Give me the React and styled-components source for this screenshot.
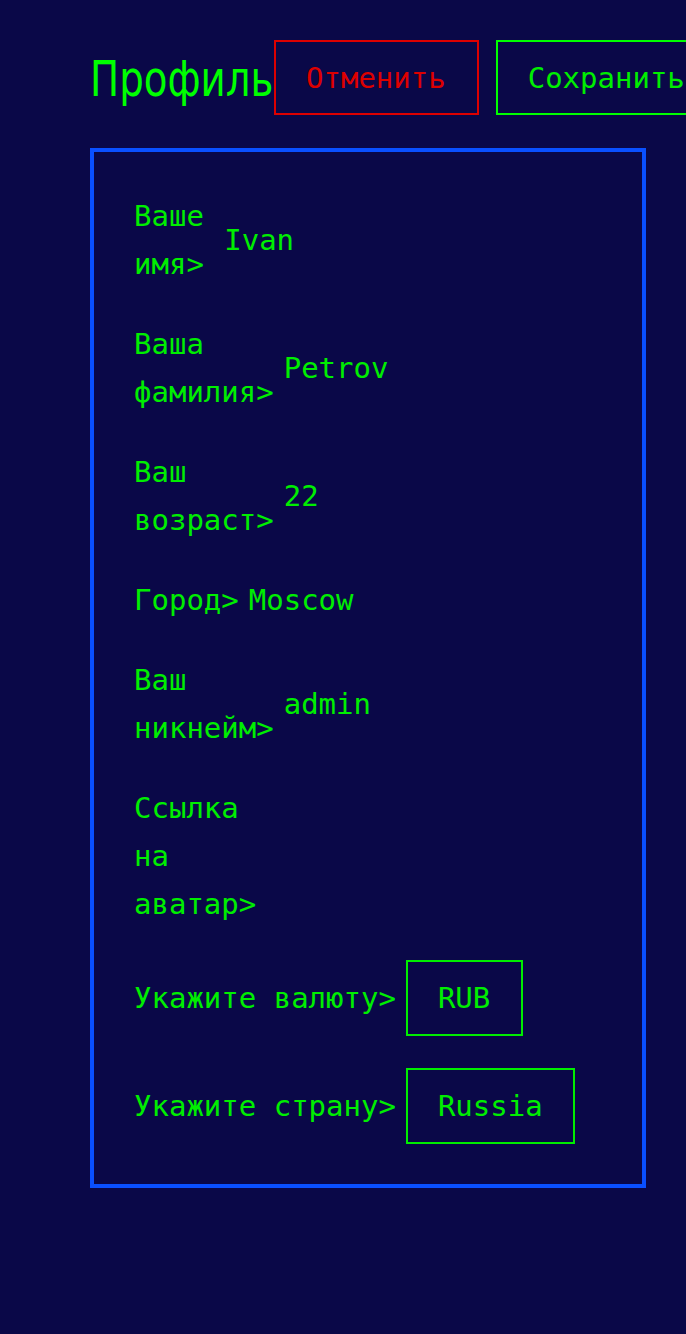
import styled, { createGlobalStyle } from "styled-components";

const GlobalStyle = createGlobalStyle`
  html, body {
    margin: 0;
    padding: 0;
    background: #0a0848;
  }
  body {
    min-height: 1334px;
    overflow: hidden;
  }
`;

const fields = [
  { label: "Ваше имя>", value: "Ivan" },
  { label: "Ваша фамилия>", value: "Petrov" },
  { label: "Ваш возраст>", value: "22" },
  { label: "Город>", value: "Moscow" },
  { label: "Ваш никнейм>", value: "admin" },
  { label: "Ссылка на аватар>", value: "" },
];

const App = () => {
  return (
    <>
      <GlobalStyle />
      <Page>
        <Header>
          <Title>Профиль</Title>
          <ActionButton tone="cancel">Отменить</ActionButton>
          <ActionButton tone="save">Сохранить</ActionButton>
        </Header>

        <Form>
          {fields.map((f) => (
            <Row key={f.label}>
              <Label>{f.label}</Label>
              <Input defaultValue={f.value} />
            </Row>
          ))}

          <Row>
            <Label>Укажите валюту&gt;</Label>
            <Select defaultValue="RUB">
              <option value="RUB">RUB</option>
            </Select>
          </Row>

          <Row>
            <Label>Укажите страну&gt;</Label>
            <Select defaultValue="Russia">
              <option value="Russia">Russia</option>
            </Select>
          </Row>
        </Form>
      </Page>
    </>
  );
};

// Styled Components
const Page = styled.div`
  padding: 40px 40px 0 90px;
  width: 686px;
  box-sizing: border-box;
`;

const Header = styled.div`
  display: flex;
  align-items: center;
  gap: 2px;
  white-space: nowrap;
  margin-bottom: 33px;
`;

/* narrow face: no condensed font installed, so squeeze DejaVu Sans */
const Title = styled.h1`
  flex: none;
  width: 182px;
  margin: 4px 0 0;
  font-family: "DejaVu Sans", sans-serif;
  font-weight: 400;
  font-size: 50px;
  line-height: 1.15;
  color: #00ff00;
  transform: scaleX(0.775);
  transform-origin: left center;
`;

const ActionButton = styled.button`
  flex: none;
  height: 75px;
  padding: 0 31px 0 30px;
  margin-right: 15px;
  background: transparent;
  border: 2px solid ${(props) => (props.tone === "cancel" ? "#dd0000" : "#00ff00")};
  color: ${(props) => (props.tone === "cancel" ? "#dd0000" : "#00ee00")};
  font-family: "DejaVu Sans Mono", monospace;
  font-size: 29px;
  cursor: pointer;
`;

const Form = styled.div`
  width: 556px;
  box-sizing: border-box;
  border: 4px solid #0a50ff;
  padding: 40px;
  display: flex;
  flex-direction: column;
  gap: 32px;
`;

const Row = styled.div`
  display: flex;
  align-items: center;
  gap: 10px;
  font-family: "DejaVu Sans Mono", monospace;
  font-size: 29px;
  line-height: 48px;
  color: #00ee00;
`;

const Label = styled.span`
  flex: 0 1 auto;
`;

const Input = styled.input`
  flex: 1 1 740px;
  min-width: 0;
  background: transparent;
  border: none;
  outline: none;
  padding: 0;
  font: inherit;
  line-height: 48px;
  color: #00ee00;
`;

const Select = styled.select`
  appearance: none;
  flex: none;
  height: 76px;
  padding: 0 30px;
  background: transparent;
  border: 2px solid #00ee00;
  border-radius: 0;
  font: inherit;
  color: #00ee00;
  outline: none;
`;

export default App;
